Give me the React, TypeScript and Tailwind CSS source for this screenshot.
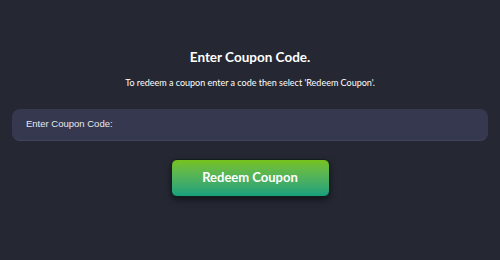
import React from "react";

export default function App() {
  return (
    <div className="w-[500px] h-[260px] bg-[#252833] flex flex-col items-center px-3 pt-[47px]" style={{ fontFamily: "Lato, 'Noto Sans', sans-serif" }}>
      <h1 className="text-[13.5px] leading-[20px] font-bold text-white">Enter Coupon Code.</h1>
      <p className="mt-[10px] text-[9px] leading-[12px] text-white">To redeem a coupon enter a code then select 'Redeem Coupon'.</p>
      <div className="mt-[20px] w-full h-[32px] rounded-[8px] bg-[#363850] border-b border-[#41435a] flex items-center px-[14px]">
        <span className="text-[9.5px] text-[#e8e8ee]" style={{ fontFamily: "'Liberation Sans', Arial, sans-serif" }}>Enter Coupon Code:</span>
      </div>
      <button className="mt-[18px] w-[159px] h-[38px] rounded-[6px] border border-[#10201c] bg-gradient-to-b from-[#76c218] to-[#14a07c] shadow-[0_3px_6px_rgba(0,0,0,0.5)] text-white text-[13px] font-bold">
        Redeem Coupon
      </button>
    </div>
  );
}
